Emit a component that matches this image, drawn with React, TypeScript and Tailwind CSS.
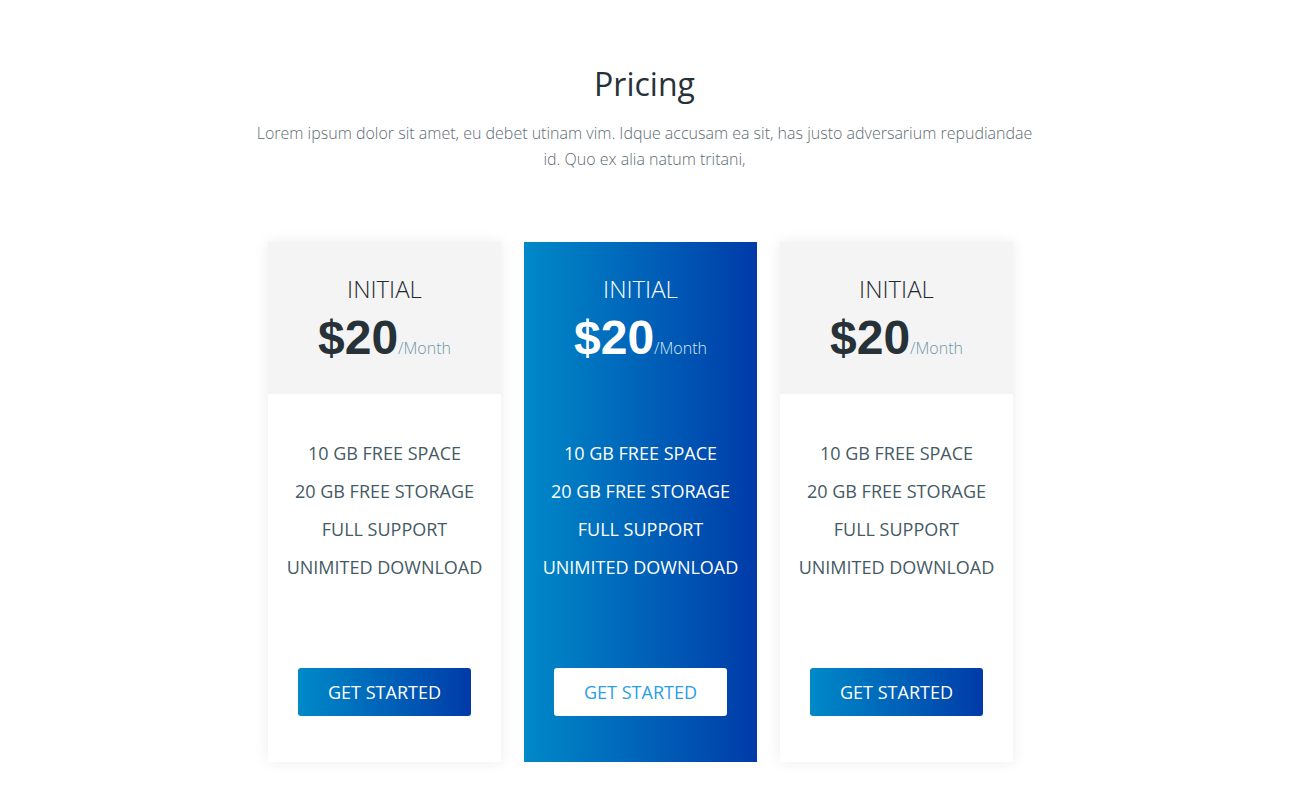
import React from "react";

const features = ["10 GB FREE SPACE", "20 GB FREE STORAGE", "FULL SUPPORT", "UNIMITED DOWNLOAD"];

function Card({ featured }: { featured?: boolean }) {
  return (
    <div
      className={
        featured
          ? "w-[233px] h-[520px] flex flex-col bg-linear-to-r from-[#0089c8] to-[#003aa8] text-white"
          : "w-[233px] h-[520px] flex flex-col bg-white shadow-[0_0_14px_rgba(0,0,0,0.08)] text-[#37474f]"
      }
    >
      <div className={featured ? "h-[152px] flex flex-col items-center pt-[32px]" : "h-[152px] flex flex-col items-center pt-[32px] bg-[#f4f4f4]"}>
        <div className={featured ? "text-[24px] leading-[30px] font-light text-white" : "text-[24px] leading-[30px] font-light text-[#1f2a30]"}>INITIAL</div>
        <div className="flex items-baseline mt-[9px]">
          <span
            className={featured ? "text-[48px] leading-[50px] font-bold text-white" : "text-[48px] leading-[50px] font-bold text-[#263238]"}
            style={{ fontFamily: '"Liberation Sans", Arial, sans-serif' }}
          >
            $20
          </span>
          <span className={featured ? "text-[16px] font-light text-[#d6ecf7]" : "text-[16px] font-light text-[#6a98a6]"}>/Month</span>
        </div>
      </div>
      <div className="flex flex-col items-center pt-[46px] gap-[12px]">
        {features.map((f) => (
          <div key={f} className={featured ? "text-[18px] leading-[26px] text-white" : "text-[18px] leading-[26px] text-[#455a64]"}>
            {f}
          </div>
        ))}
      </div>
      <div className="mt-auto mb-[46px] flex justify-center">
        <button
          className={
            featured
              ? "w-[173px] h-[48px] rounded-[3px] bg-white text-[#2a9ee6] text-[18px]"
              : "w-[173px] h-[48px] rounded-[3px] bg-linear-to-r from-[#0089c8] to-[#003aa8] text-white text-[18px]"
          }
        >
          GET STARTED
        </button>
      </div>
    </div>
  );
}

export default function App() {
  return (
    <div className="min-h-[803px] bg-white flex flex-col items-center" style={{ fontFamily: '"Open Sans", sans-serif' }}>
      <h1 className="mt-[62px] text-[32px] leading-[44px] font-normal text-[#263238]">Pricing</h1>
      <p className="mt-[14px] w-[790px] text-center text-[16px] leading-[26px] font-light text-[#5f6b73]">
        Lorem ipsum dolor sit amet, eu debet utinam vim. Idque accusam ea sit, has justo adversarium repudiandae id. Quo ex alia natum tritani,
      </p>
      <div className="mt-[70px] flex gap-[23px] pr-[8px]">
        <Card />
        <Card featured />
        <Card />
      </div>
    </div>
  );
}
